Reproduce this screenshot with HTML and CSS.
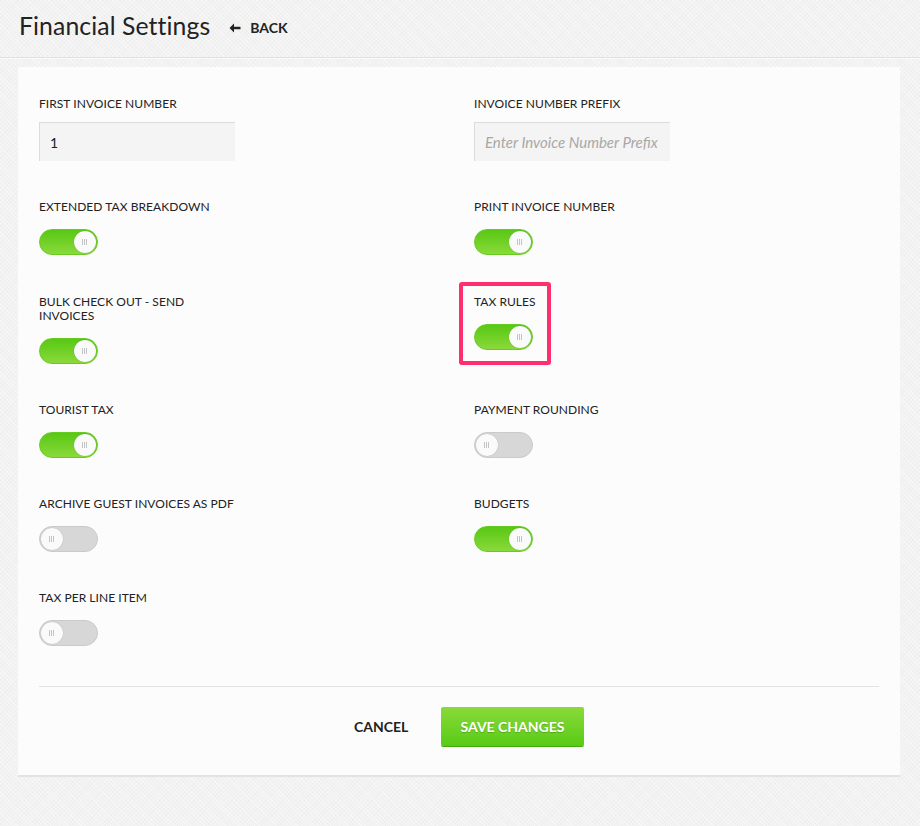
FILE: index.html
```html
<!DOCTYPE html>
<html>
<head>
<meta charset="utf-8">
<link rel="stylesheet" href="styles.css">
</head>
<body>
<header class="page-header">
  <h1 class="title">Financial Settings</h1>
  <a class="back" href="#">
    <svg class="back-arrow" width="12" height="10" viewBox="0 0 12 10"><path d="M5 0.5 L0.5 5 L5 9.5 L5 6.3 L11.5 6.3 L11.5 3.7 L5 3.7 Z" fill="#222"/></svg>
    <span>BACK</span>
  </a>
</header>
<main class="card">
  <div class="grid">
    <div class="field">
      <label class="label">FIRST INVOICE NUMBER</label>
      <input class="input" type="text" value="1">
    </div>
    <div class="field">
      <label class="label">INVOICE NUMBER PREFIX</label>
      <input class="input" type="text" placeholder="Enter Invoice Number Prefix">
    </div>

    <div class="field">
      <label class="label">EXTENDED TAX BREAKDOWN</label>
      <span class="toggle on"><span class="knob"></span></span>
    </div>
    <div class="field">
      <label class="label">PRINT INVOICE NUMBER</label>
      <span class="toggle on"><span class="knob"></span></span>
    </div>

    <div class="field">
      <label class="label narrow">BULK CHECK OUT - SEND INVOICES</label>
      <span class="toggle on"><span class="knob"></span></span>
    </div>
    <div class="field highlight">
      <label class="label">TAX RULES</label>
      <span class="toggle on"><span class="knob"></span></span>
    </div>

    <div class="field">
      <label class="label">TOURIST TAX</label>
      <span class="toggle on"><span class="knob"></span></span>
    </div>
    <div class="field">
      <label class="label">PAYMENT ROUNDING</label>
      <span class="toggle"><span class="knob"></span></span>
    </div>

    <div class="field">
      <label class="label">ARCHIVE GUEST INVOICES AS PDF</label>
      <span class="toggle"><span class="knob"></span></span>
    </div>
    <div class="field">
      <label class="label">BUDGETS</label>
      <span class="toggle on"><span class="knob"></span></span>
    </div>

    <div class="field">
      <label class="label">TAX PER LINE ITEM</label>
      <span class="toggle"><span class="knob"></span></span>
    </div>
  </div>
  <div class="actions">
    <button class="btn-cancel">CANCEL</button>
    <button class="btn-save">SAVE CHANGES</button>
  </div>
</main>
</body>
</html>
```
FILE: styles.css
```css
html, body {
  margin: 0;
  padding: 0;
}
body {
  background-color: #f2f2f2;
  background-image:
    repeating-linear-gradient(45deg, rgba(255,255,255,0.35) 0 1px, transparent 1px 3px),
    repeating-linear-gradient(-45deg, rgba(0,0,0,0.015) 0 1px, transparent 1px 3px);
  font-family: Lato, "Open Sans", "Liberation Sans", sans-serif;
  color: #222;
  height: 826px;
  overflow: hidden;
}
.page-header {
  display: flex;
  align-items: center;
  height: 58px;
  padding-left: 19px;
  padding-bottom: 2px;
  box-sizing: border-box;
  border-bottom: 1px solid #e1e1e1;
  box-shadow: 0 1px 0 #fafafa;
}
.title {
  margin: 0 0 4px 0;
  font-size: 24.75px;
  font-weight: 400;
  color: #222;
  letter-spacing: 0.1px;
}
.back {
  display: flex;
  align-items: center;
  margin-left: 19px;
  text-decoration: none;
  color: #222;
  font-weight: 700;
  font-size: 14px;
}
.back-arrow {
  margin-right: 9px;
}
.card {
  margin: 9px 20px 0 18px;
  background: #fcfcfc;
  padding: 30px 21px 29.5px 21px;
  box-shadow: 0 2px 0 #e3e3e3;
}
.grid {
  display: grid;
  grid-template-columns: 1fr 1fr;
  column-gap: 30px;
  row-gap: 39.25px;
  align-items: start;
  padding-bottom: 39.5px;
  border-bottom: 1px solid #e2e2e2;
}
.field {
  display: flex;
  flex-direction: column;
  align-items: flex-start;
}
.label {
  display: block;
  font-size: 12px;
  line-height: 14px;
  color: #222;
  letter-spacing: 0.05px;
}
.label.narrow {
  max-width: 190px;
}
.input {
  margin-top: 11px;
  width: 196px;
  height: 39px;
  box-sizing: border-box;
  border: none;
  border-top: 1px solid #dcdcdc;
  border-left: 1px solid #dcdcdc;
  background: #f4f4f4;
  padding: 0 10px;
  font-family: Lato, "Open Sans", sans-serif;
  font-size: 14px;
  color: #222;
  outline: none;
}
.input::placeholder {
  color: #a8a8a8;
  font-style: italic;
  font-size: 15px;
}
.toggle {
  margin-top: 15px;
  position: relative;
  display: block;
  width: 59px;
  height: 26px;
  box-sizing: border-box;
  border-radius: 13px;
  background: #d7d7d7;
  border: 1px solid #cacaca;
}
.toggle.on {
  background: linear-gradient(#58c814, #8ad93a);
  border: 1px solid #66cc22;
}
.knob {
  position: absolute;
  top: 1px;
  left: 1px;
  width: 22px;
  height: 22px;
  border-radius: 50%;
  background: #fafafa;
  box-shadow: 0 0 1px rgba(0,0,0,0.25);
}
.toggle.on .knob {
  left: auto;
  right: 1px;
}
.knob::after {
  content: "";
  position: absolute;
  left: 8px;
  top: 8px;
  width: 5px;
  height: 6px;
  background: repeating-linear-gradient(90deg, #c4c4c4 0 1px, transparent 1px 2px);
}
.highlight {
  position: relative;
  width: fit-content;
}
.highlight::after {
  content: "";
  position: absolute;
  top: -13px;
  left: -15px;
  right: -15px;
  bottom: -15px;
  border: 4px solid #ff2f6e;
  border-radius: 3px;
}
.actions {
  display: flex;
  justify-content: center;
  align-items: center;
  gap: 33px;
  padding-top: 20px;
  padding-left: 20px;
}
.btn-cancel {
  background: none;
  border: none;
  font-family: Lato, "Open Sans", sans-serif;
  font-weight: 700;
  font-size: 14px;
  color: #222;
  padding: 0;
  width: 54px;
}
.btn-save {
  width: 143px;
  height: 39px;
  border: none;
  border-radius: 2px;
  background: linear-gradient(#8ada3a, #58cb16);
  box-shadow: 0 1px 0 #47a812;
  color: #fff;
  font-family: Lato, "Open Sans", sans-serif;
  font-weight: 700;
  font-size: 14px;
  text-shadow: 0 1px 1px rgba(0,0,0,0.2);
}
```
